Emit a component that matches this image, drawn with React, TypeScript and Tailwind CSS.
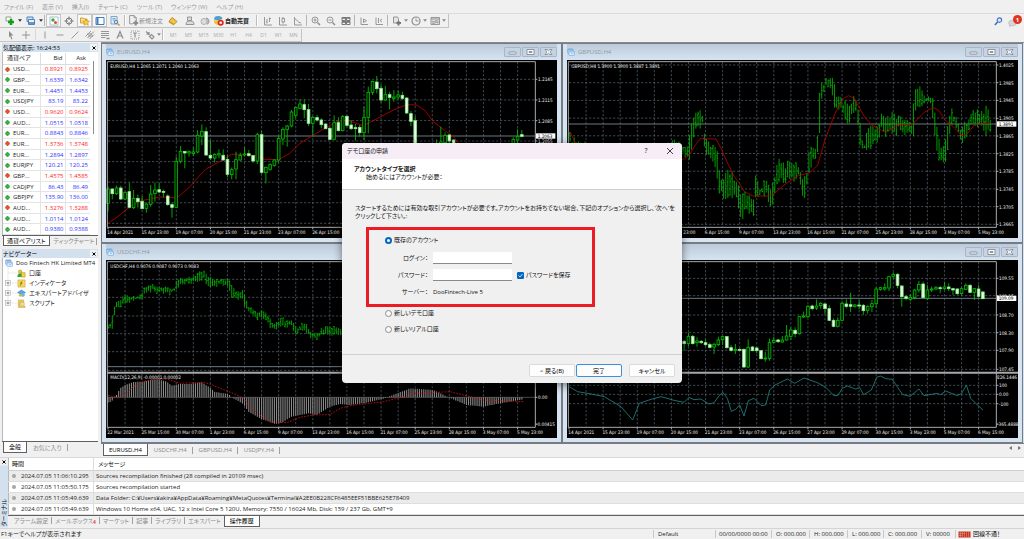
import React from 'react';

/* ---------- chart primitives ---------- */

// [wick top, body top, body bottom, wick bottom, filled]
type Candle = [number, number, number, number, 0 | 1] | null;
type Pt = [number, number];
type Env = [number, number, number];

const GREEN = '#00c000';
const STEP = 12.8;

const line = (pts: Pt[]) => pts.map((p) => p.join(',')).join(' ');

function Candles({ data, start = 0 }: { data: Candle[]; start?: number }) {
  return (
    <g>
      {data.map((c, i) => {
        if (!c) return null;
        const x = 24 + STEP * (i + start);
        const [h, t, b, l, f] = c;
        return (
          <g key={i}>
            <path d={`M${x} ${h}V${l}`} stroke={GREEN} strokeWidth="2.6" />
            <rect x={x - 4} y={t} width="8" height={Math.max(b - t, 3)} fill={f ? '#e4ffe0' : '#001800'} stroke={f ? '#8be88b' : GREEN} strokeWidth="2.4" />
          </g>
        );
      })}
    </g>
  );
}

function sample(env: Env[], x: number): Pt {
  for (let i = 1; i < env.length; i++) {
    if (x <= env[i][0]) {
      const a = env[i - 1];
      const b = env[i];
      const k = (x - a[0]) / (b[0] - a[0] || 1);
      return [a[1] + (b[1] - a[1]) * k, a[2] + (b[2] - a[2]) * k];
    }
  }
  const e = env[env.length - 1];
  return [e[1], e[2]];
}

const noise = (n: number) => {
  const v = Math.sin(n * 12.9898) * 43758.5453;
  return v - Math.floor(v);
};

function Bars({ env, jitter }: { env: Env[]; jitter: number }) {
  const out: React.ReactNode[] = [];
  const end = env[env.length - 1][0];
  for (let i = 0, x = env[0][0]; x <= end; i++, x += 6.4) {
    const [h, l] = sample(env, x);
    const a = h + (noise(i) - 0.35) * jitter;
    const b = l + (noise(i + 99) - 0.65) * jitter;
    const o = a + (b - a) * noise(i + 7);
    const c = a + (b - a) * noise(i + 31);
    out.push(<path key={i} d={`M${x} ${a}V${b}M${x - 3} ${o}H${x}M${x} ${c}H${x + 3}`} />);
  }
  return <g stroke="#00b400" strokeWidth="2.6" fill="none">{out}</g>;
}

function range(from: number, step: number, to: number) {
  const r: number[] = [];
  for (let v = from; v <= to; v += step) r.push(v);
  return r;
}

type Label = [number, string];

interface ChartProps {
  caption: string;
  rows: number[];
  labels: Label[];
  price?: Label;
  dates: string[];
  firstDate?: number;
  split?: boolean;
  priceLine: number;
  children: React.ReactNode;
}

function Chart({ caption, rows, labels, price, dates, firstDate = 0, split, priceLine, children }: ChartProps) {
  return (
    <svg viewBox="18 60 1353 534" className="block h-auto w-full bg-black font-['DejaVu_Sans_Condensed','DejaVu_Sans',sans-serif] text-[14px]">
      <g stroke="#5b6a78" strokeWidth="2" strokeDasharray="7 5" fill="none">
        {range(75.2, 51.2, 1300).map((x) => <path key={x} d={`M${x} 66V560`} />)}
        {rows.map((y) => <path key={y} d={`M24 ${y}H1304`} />)}
      </g>
      <path d={`M24 ${priceLine}H1306`} stroke="#6c7884" strokeWidth="3" />
      {children}
      {split && <path d="M22 398H1371" stroke="#a8a8a8" strokeWidth="6" />}
      <path d="M22 65H1306V562H22Z" stroke="#a9a9a9" strokeWidth="3" fill="none" />
      <g stroke="#b0b0b0" strokeWidth="3">
        {range(24, 102.4, 1300).map((x) => <path key={x} d={`M${x} 562v6`} />)}
        {labels.map(([y]) => <path key={y} d={`M1306 ${y}h6`} />)}
      </g>
      <g fill="#ececec">
        {caption && <text x="31" y="83">{caption}</text>}
        {labels.map(([y, t]) => <text key={t} x={t.length > 7 ? 1308 : 1314} y={y + 6}>{t}</text>)}
        {dates.map((d, i) => <text key={d} x={22 + 102.4 * (i + firstDate)} y="582">{d}</text>)}
      </g>
      {price && (
        <g>
          <rect x="1308" y={price[0] - 8} width="58" height="16" fill="#fff" />
          <text x="1313" y={price[0] + 5} fill="#000">{price[1]}</text>
        </g>
      )}
    </svg>
  );
}

/* ---------- chart data ---------- */

const eurusd: Candle[] = [
  [440, 447, 490, 515, 0], [445, 447, 461, 478, 1], [437, 444, 461, 465, 0], [437, 444, 477, 480, 1], [455, 457, 477, 480, 0],
  [429, 455, 502, 505, 1], [450, 475, 503, 507, 0], [464, 475, 485, 503, 1], [468, 484, 506, 508, 1], [488, 492, 505, 518, 0],
  [435, 462, 493, 500, 0], [428, 450, 461, 485, 0], [430, 449, 456, 460, 1], [449, 454, 457, 472, 1], [463, 468, 494, 497, 1],
  [488, 494, 502, 533, 1], [350, 364, 502, 503, 0], [318, 334, 364, 370, 0], [333, 334, 339, 385, 1], [331, 335, 339, 350, 0],
  [322, 336, 341, 348, 0], [270, 286, 336, 340, 0], [253, 274, 288, 315, 0], [262, 275, 345, 348, 1], [300, 346, 354, 360, 1],
  [340, 343, 354, 368, 0], [328, 341, 345, 355, 0], [328, 346, 360, 362, 1], [345, 358, 403, 412, 1], [383, 389, 404, 418, 0],
  [335, 359, 387, 418, 0], [338, 346, 360, 362, 0], [322, 342, 345, 350, 0], [330, 341, 347, 350, 1], [345, 347, 363, 368, 1],
  [278, 284, 363, 372, 0], [273, 284, 397, 402, 1], [380, 382, 398, 430, 0], [370, 374, 388, 392, 0], [358, 360, 376, 380, 0],
  [288, 295, 360, 368, 0], [262, 268, 297, 315, 0], [255, 258, 269, 320, 0], [210, 216, 258, 262, 0], [200, 202, 226, 235, 0],
  [177, 192, 205, 208, 0], [178, 194, 209, 235, 1], [192, 209, 250, 258, 1], [228, 232, 250, 290, 0], [225, 233, 240, 245, 1],
  [235, 240, 254, 265, 1], [250, 252, 266, 268, 1], [262, 265, 298, 300, 1], [226, 248, 298, 300, 0], [232, 248, 272, 274, 1],
  [225, 230, 272, 274, 0], [226, 229, 256, 260, 1], [240, 255, 266, 270, 1], [252, 263, 266, 302, 1], [255, 262, 278, 290, 1],
  [200, 232, 278, 300, 0], [140, 157, 232, 280, 0], [122, 124, 157, 165, 0], [108, 126, 146, 160, 1], [133, 145, 180, 188, 1],
  [138, 164, 180, 182, 0], [155, 164, 172, 208, 1], [150, 171, 175, 185, 0], [152, 165, 171, 178, 0], [155, 166, 175, 180, 1],
  [172, 174, 219, 222, 1], [213, 221, 244, 258, 1], [228, 242, 330, 335, 1], null, null, null, null,
  [298, 310, 330, 335, 0], [260, 306, 340, 345, 0], [278, 286, 308, 312, 0], [282, 285, 303, 320, 1], [298, 300, 330, 335, 1],
  null, null, null, null, null, null, null, null, null, null, null, null, null,
  [292, 298, 310, 320, 0], [268, 289, 300, 315, 0], [270, 284, 289, 292, 1],
];

const eurusdAvg: Pt[] = [
  [24, 550], [60, 525], [90, 500], [120, 483], [180, 471], [230, 474], [270, 440], [300, 405], [320, 386], [360, 364], [395, 343],
  [440, 343], [470, 348], [495, 358], [535, 359], [570, 340], [600, 310], [640, 285], [680, 262], [710, 245], [740, 240], [790, 257],
  [830, 237], [880, 210], [920, 194], [950, 195], [975, 212], [1000, 245], [1025, 265], [1060, 290], [1080, 315],
];

const gbpusd: Env[] = [
  [27, 285, 310], [40, 300, 345], [180, 340, 380], [340, 305, 360], [375, 320, 350], [385, 285, 355], [395, 240, 305], [405, 222, 275], [424, 215, 250],
  [428, 285, 330], [440, 310, 355], [460, 320, 365], [467, 320, 410], [475, 390, 460], [485, 430, 475], [500, 393, 470], [515, 400, 475],
  [530, 440, 480], [540, 455, 545], [550, 460, 515], [560, 470, 505], [577, 480, 548], [583, 405, 465], [600, 440, 470], [618, 415, 470],
  [628, 440, 515], [640, 400, 465], [655, 362, 420], [668, 370, 435], [685, 370, 420], [700, 360, 420], [715, 380, 412], [730, 415, 485],
  [738, 390, 440], [745, 335, 400], [757, 320, 350], [765, 325, 360], [770, 280, 345], [775, 148, 280], [785, 118, 155], [797, 118, 140],
  [807, 95, 145], [820, 140, 200], [830, 170, 210], [850, 180, 225], [860, 190, 260], [875, 178, 215], [885, 175, 220], [892, 200, 270],
  [900, 280, 340], [910, 305, 330], [928, 245, 330], [940, 250, 300], [950, 270, 325], [963, 200, 260], [975, 230, 285], [985, 220, 270],
  [1005, 230, 290], [1020, 215, 260], [1035, 240, 285], [1050, 250, 290], [1058, 180, 290], [1065, 150, 215], [1072, 140, 195], [1085, 150, 190],
  [1095, 165, 200], [1110, 165, 190], [1120, 200, 280], [1130, 260, 360], [1140, 320, 370], [1155, 300, 370], [1162, 240, 320], [1168, 200, 260],
  [1180, 215, 255], [1195, 250, 300], [1205, 270, 320], [1215, 240, 290], [1230, 220, 260], [1245, 210, 265], [1262, 220, 250], [1275, 190, 290],
  [1290, 235, 262],
];

const gbpusdAvg: Pt[] = [
  [27, 275], [45, 312], [200, 380], [370, 357], [385, 345], [400, 320], [418, 296], [465, 297], [480, 325], [500, 370], [520, 410], [535, 430],
  [550, 455], [575, 468], [620, 468], [640, 460], [672, 433], [712, 407], [747, 398], [770, 375], [792, 300], [822, 220], [847, 176],
  [862, 167], [880, 175], [907, 225], [932, 255], [974, 278], [1012, 255], [1054, 253], [1092, 215], [1117, 203], [1132, 210], [1154, 242],
  [1177, 260], [1202, 287], [1217, 283], [1242, 253], [1287, 250],
];

const usdchf: Env[] = [
  [24, 258, 268], [36, 235, 268], [42, 200, 235], [50, 185, 205], [60, 180, 200], [75, 165, 190], [85, 163, 185], [100, 170, 182],
  [125, 160, 180], [128, 145, 180], [135, 140, 155], [150, 135, 155], [158, 130, 150], [175, 143, 160], [190, 142, 160], [210, 145, 162],
  [225, 140, 152], [230, 120, 145], [245, 115, 135], [260, 108, 130], [275, 110, 130], [290, 100, 125], [300, 95, 122], [312, 88, 118],
  [320, 105, 135], [340, 122, 140], [355, 118, 138], [385, 115, 135], [395, 135, 175], [410, 160, 178], [425, 148, 175], [435, 170, 205],
  [445, 200, 215], [460, 208, 225], [472, 218, 240], [485, 215, 232], [500, 220, 240], [512, 240, 268], [525, 255, 268], [545, 230, 255],
  [555, 245, 262], [575, 240, 260], [590, 262, 285], [605, 252, 270], [618, 248, 280], [630, 272, 290], [655, 285, 300], [662, 265, 285],
  [700, 258, 285], [740, 265, 280],
];

const macd: Env[] = [
  [24, 488, 0], [35, 485, 0], [42, 472, 0], [50, 465, 0], [60, 445, 0], [75, 435, 0], [100, 426, 0], [130, 425, 0], [150, 420, 0],
  [175, 418, 0], [200, 425, 0], [215, 437, 0], [240, 432, 0], [270, 432, 0], [305, 427, 0], [325, 440, 0], [345, 456, 0], [385, 462, 0],
  [400, 475, 0], [430, 492, 0], [445, 515, 0], [480, 535, 0], [525, 552, 0], [545, 548, 0], [575, 530, 0], [600, 525, 0], [625, 520, 0],
  [650, 525, 0], [690, 500, 0], [720, 492, 0], [750, 495, 0], [800, 488, 0], [850, 476, 0], [930, 445, 0], [1000, 450, 0], [1050, 474, 0],
  [1100, 495, 0], [1150, 500, 0], [1200, 490, 0], [1270, 478, 0],
];

const macdSignal: Pt[] = [
  [24, 467], [60, 473], [75, 465], [100, 440], [130, 425], [160, 418], [200, 417], [240, 430], [310, 427], [330, 432], [360, 445],
  [400, 460], [430, 475], [450, 500], [480, 525], [510, 545], [560, 548], [600, 532], [640, 525], [690, 524], [720, 505], [750, 497],
  [850, 485], [950, 460], [1050, 455], [1150, 480], [1270, 485],
];

const usdjpy: Candle[] = [
  [300, 304, 311, 332, 1], [278, 289, 311, 318, 0], [285, 289, 311, 313, 1], [292, 303, 308, 320, 0], [300, 304, 308, 312, 1],
  [298, 308, 314, 318, 1], [308, 314, 322, 325, 1], [308, 313, 321, 342, 0], [290, 300, 314, 318, 0], [288, 290, 299, 315, 0],
  [288, 290, 323, 326, 1], [315, 323, 331, 335, 1], [312, 328, 331, 342, 0], [325, 328, 331, 332, 1], [326, 328, 381, 384, 1],
  [298, 322, 381, 384, 0], [318, 321, 332, 334, 1], [320, 324, 332, 340, 1], [330, 332, 356, 358, 1], [335, 354, 357, 365, 0],
  [295, 308, 356, 362, 0], [290, 301, 307, 310, 0], [296, 300, 305, 309, 1], [288, 300, 306, 308, 0], [255, 288, 300, 302, 0],
  [262, 270, 289, 300, 0], [262, 271, 281, 292, 1], [228, 230, 281, 284, 0], [215, 228, 231, 234, 0], [195, 199, 230, 234, 0],
  [194, 198, 206, 211, 1], [178, 198, 204, 210, 0], [186, 190, 197, 206, 0], [190, 192, 206, 222, 1], [196, 206, 241, 243, 1],
  [235, 241, 259, 262, 1], [232, 241, 259, 262, 0], [184, 190, 241, 244, 0], [178, 192, 199, 205, 1], [158, 194, 199, 216, 1],
  [192, 195, 199, 203, 0], [180, 195, 198, 208, 1], [192, 196, 212, 224, 1], [196, 200, 211, 221, 0], [180, 191, 200, 216, 0],
  [142, 147, 191, 203, 0], [141, 143, 148, 152, 0], [130, 143, 147, 152, 0], [108, 110, 144, 153, 0], [97, 103, 109, 115, 0],
  [100, 103, 136, 145, 1], [135, 138, 170, 200, 1], [165, 170, 175, 181, 1], [162, 172, 178, 184, 0], [147, 150, 173, 178, 0],
  [123, 133, 150, 158, 0], [125, 132, 173, 176, 1], [135, 150, 175, 180, 0], [140, 147, 150, 156, 0], [138, 143, 147, 150, 0],
  [138, 143, 145, 160, 1], [125, 141, 146, 150, 0], [130, 141, 146, 153, 1], [143, 146, 150, 165, 1], [145, 147, 161, 165, 1],
  [142, 146, 161, 164, 0], [130, 136, 148, 150, 0], [132, 136, 157, 160, 1], [145, 146, 157, 180, 0], [135, 147, 169, 175, 1],
  [153, 156, 176, 178, 1],
];

const cci: Pt[] = [
  [24, 440], [50, 455], [90, 462], [130, 470], [180, 500], [215, 540], [235, 490], [270, 478], [300, 470],
  [339, 481], [369, 487], [384, 472], [399, 479], [419, 477], [444, 492], [459, 488], [474, 467], [486, 457], [499, 475], [511, 514],
  [524, 508], [536, 495], [549, 528], [562, 482], [579, 475], [601, 497], [614, 495], [626, 450], [642, 435], [679, 417], [701, 430],
  [729, 414], [769, 428], [794, 442], [819, 467], [831, 466], [844, 445], [859, 438], [884, 447], [896, 443], [908, 464], [931, 450],
  [947, 412], [959, 408], [974, 416], [994, 418], [1009, 440], [1024, 463], [1047, 469], [1074, 447], [1089, 467], [1129, 460],
  [1139, 464], [1154, 453], [1189, 467], [1202, 460], [1216, 435], [1229, 475], [1244, 490], [1266, 510],
];

const marchDates = ['22 Mar 2021', '25 Mar 15:00', '30 Mar 07:00', '1 Apr 23:00', '6 Apr 15:00', '9 Apr 07:00', '13 Apr 23:00', '16 Apr 15:00', '21 Apr 07:00', '25 Apr 23:00', '28 Apr 15:00', '3 May 07:00', '5 May 23:00'];
const aprilDates = ['14 Apr 2021', '15 Apr 23:00', '19 Apr 07:00', '20 Apr 15:00', '21 Apr 23:00', '23 Apr 07:00', '26 Apr 15:00', '27 Apr 23:00', '29 Apr 07:00', '30 Apr 15:00', '3 May 23:00', '5 May 07:00', '6 May 15:00'];

/* ---------- windows ---------- */

function WindowGlyph() {
  return (
    <svg viewBox="0 0 18 18" className="size-2 shrink-0">
      <rect x="1.5" y="2" width="12" height="10" rx="1" fill="#cfe3f8" stroke="#6ea8de" strokeWidth="1.6" />
      <path d="M2 4h11" stroke="#6ea8de" strokeWidth="2.6" />
      <rect x="4.500" y="7" width="12" height="9.500" rx="1" fill="#f2f8ff" stroke="#6ea8de" strokeWidth="1.6" />
      <path d="M5 9h11M8 14l2-2 2 1 2-2" stroke="#6ea8de" strokeWidth="1.6" fill="none" />
    </svg>
  );
}

function ChartWindow({ title, children }: { title: string; children: React.ReactNode }) {
  return (
    <section className="min-w-0 border border-[#767c84] bg-[#d6e3f1] px-1 pb-1">
      <header className="flex h-4 items-center gap-[3px] bg-linear-to-b from-[#bccada] to-[#d6e3f1]">
        <WindowGlyph />
        <h2 className="flex-1 text-[#8f9aa6]">{title}</h2>
        <div className="flex gap-px">
          {['最小化', '最大化', '閉じる'].map((n, i) => (
            <button key={n} type="button" aria-label={n} className="flex h-[10px] w-[17px] items-center justify-center rounded-[1px] border border-[#a9b6c8] bg-[#c6d3e2]">
              <svg viewBox="0 0 18 12" className="h-[6px] w-[9px]" fill="#fff" stroke="#767f8b" strokeWidth="1.6">
                {i === 0 && <rect x="2" y="6" width="14" height="4" rx="1" />}
                {i === 1 && <path d="M2 1h14v10H2ZM6 5h6v2H6Z" />}
                {i === 2 && <path d="M2 1h4l3 2.500L12 1h4l-4 5 4 5h-4L9 8.500 6 11H2l4-5Z" />}
              </svg>
            </button>
          ))}
        </div>
      </header>
      {children}
    </section>
  );
}

function Tabs({ items, active, tight, className = '' }: { items: string[]; active: number; tight?: boolean; className?: string }) {
  return (
    <div role="tablist" className={`flex items-stretch whitespace-nowrap ${className}`}>
      {items.map((t, i) =>
        i === active ? (
          <button key={t} type="button" role="tab" aria-selected className={`border border-t-0 border-[#606060] bg-white text-black ${tight ? 'px-[3px]' : 'px-[5px]'}`}>{t}</button>
        ) : (
          <button key={t} type="button" role="tab" aria-selected={false} className={`flex items-center text-[#8a8a8a] ${tight ? 'gap-[2px] pl-1' : 'gap-[5px] pl-[6px]'}`}>
            {t}
            <span className="h-[7px] w-px bg-[#a0a0a0]" />
          </button>
        ),
      )}
    </div>
  );
}

/* ---------- toolbar ---------- */

function Glyph({ children, box, size = 'w-[15px]', label }: { children: React.ReactNode; box?: boolean; size?: string; label: string }) {
  return (
    <button type="button" aria-label={label} className={`flex h-[13px] shrink-0 items-center justify-center ${size} ${box ? 'border border-[#c3c3c3] bg-[#f8f8f8]' : ''}`}>
      <svg viewBox="0 0 20 20" className="size-[10px]" fill="none" stroke="#8d8d8d" strokeWidth="1.8">{children}</svg>
    </button>
  );
}

const Arrow = ({ grey }: { grey?: boolean }) => (
  <svg viewBox="0 0 6 4" className="h-[3px] w-1 shrink-0"><path d="M0 0h6L3 4Z" fill={grey ? '#8a8a8a' : '#333'} /></svg>
);
const Sep = () => <span className="mx-px h-[11px] w-px shrink-0 bg-[#b4b4b4]" />;
const Handle = () => <span className="ml-px mr-[2px] h-[11px] w-[2px] shrink-0 border-l border-[#bcbcbc] bg-white" />;

function TopToolbar() {
  return (
    <div className="flex h-[14px] items-center">
      <div className="flex h-[14px] items-center border-r border-b border-[#c4c4c4] pl-px">
        <Glyph label="新規チャート" size="w-[17px]">
          <path d="M2 2h10v8H2Z" fill="#fff" stroke="#7d9a7d" />
          <path d="M12 6v12M6 12h12" stroke="#169c1c" strokeWidth="5" />
        </Glyph>
        <Arrow />
        <Glyph label="プロファイル" size="w-[17px]">
          <path d="M2 2h12v9H2Z" fill="#cfe3f6" stroke="#3c78b4" />
          <path d="M5 7h12v10H5Z" fill="#e9f3fc" stroke="#3c78b4" />
          <path d="M5 14h12" stroke="#3c78b4" strokeWidth="3" />
        </Glyph>
        <Arrow />
        <Sep />
        <Glyph box label="気配値表示">
          <path d="M2 2h16v16H2Z" fill="#fff" stroke="#9db7cf" />
          <circle cx="8" cy="8" r="3.500" fill="#3cab3c" stroke="none" />
          <circle cx="13" cy="13" r="3" fill="#e34b32" stroke="none" />
        </Glyph>
        <Glyph label="十字カーソル" size="w-[16px]">
          <circle cx="10" cy="10" r="6" stroke="#6d6d6d" />
          <path d="M10 1v7M10 12v7M1 10h7M12 10h7" stroke="#6d6d6d" />
        </Glyph>
        <Glyph box label="ナビゲーター">
          <path d="M1 4h6l2 2h5v8H1Z" fill="#ffe08a" stroke="#c8962a" />
          <path d="m12 6 2 4 5 .5-3.500 3 1 5-4.500-2.500L8 18.500l1-5-3.500-3 5-.5Z" fill="#ffd23c" stroke="#c08a12" strokeWidth="1.200" />
        </Glyph>
        <Glyph box label="ターミナル">
          <path d="M2 3h16v14H2Z" fill="#fff" stroke="#2f6db3" />
          <path d="M3 4h4v12H3Z" fill="#3a7fd0" stroke="none" />
        </Glyph>
        <Glyph label="テスター" size="w-[16px]">
          <path d="M2 1h12v15H2Z" fill="#e3eef8" stroke="#7b9cbc" />
          <path d="M5 5h6M5 8h6" stroke="#7b9cbc" />
          <circle cx="12" cy="12" r="3.500" fill="#bfe0f6" stroke="#4c7fae" />
          <path d="m15 15 4 4" stroke="#c79a2b" strokeWidth="3" />
        </Glyph>
        <Handle />
        <button type="button" className="flex shrink-0 items-center text-[#8d8d8d]">
          <svg viewBox="0 0 20 20" className="size-[11px]" fill="none" stroke="#8d8d8d" strokeWidth="1.600">
            <path d="M3 1h8l4 4v6M3 1v15h6" /><path d="M11 1v4h4" /><path d="M14 10v9M9.500 14.500h9" strokeWidth="4" />
          </svg>
          新規注文
        </button>
        <Glyph label="MetaEditor" size="w-[19px]">
          <path d="m2 11 6-8 10 8-6 6Z" fill="#f5c443" stroke="#b8861b" />
          <path d="m2 11 10 6v2L2 13Z" fill="#c58f1c" stroke="none" />
        </Glyph>
        <Glyph label="印刷"><path d="M5 2h8v7H5ZM2 17c0-5 2-7 8-7s8 2 8 7Z" fill="#ddd" /></Glyph>
        <Glyph label="VPS"><circle cx="8" cy="11" r="6" fill="#ddd" stroke="#aaa" /><path d="M12 4c5 0 6 5 6 7s-2 5-4 6" fill="#bbb" /></Glyph>
        <button type="button" className="flex shrink-0 items-center gap-px pl-px font-bold text-[#222]">
          <svg viewBox="0 0 20 20" className="size-[11px]">
            <path d="M2 8c0-5 4-6 8-6s7 2 7 5l-7 4Z" fill="#4f9fd0" /><path d="M2 9c4 2 9 1 13-2l-1 10c-4 2-9 1-12-3Z" fill="#f1c13b" />
            <circle cx="14" cy="14" r="5.500" fill="#d9291c" /><path d="M12 12h4v4h-4Z" fill="#fff" />
          </svg>
          自動売買
        </button>
        <span className="w-[6px]" />
        <Handle />
        <Glyph label="バーチャート"><path d="M3 2v16h15M8 6v9M8 12H6M13 3v9M13 5h3" /></Glyph>
        <Glyph label="ローソク足"><path d="M3 2v16h15M10 2v3M10 12v3M8 5h5v7H8Z" /></Glyph>
        <Glyph label="ラインチャート"><path d="M3 2v16h15M4 6c4 0 5 8 12 8" /></Glyph>
        <Sep />
        <Glyph label="拡大"><circle cx="8" cy="8" r="6" /><path d="m13 13 5 5" strokeWidth="3" /><path d="M5 8h6M8 5v6" /></Glyph>
        <Glyph label="縮小"><circle cx="8" cy="8" r="6" /><path d="m13 13 5 5" strokeWidth="3" /><path d="M5 8h6" /></Glyph>
        <Glyph label="整列"><path d="M2 3h7v6H2ZM11 3h7v6h-7ZM2 11h7v6H2ZM11 11h7v6h-7Z" stroke="#6a6a6a" /><path d="M2 4h16M2 12h16" strokeWidth="3" stroke="#777" /></Glyph>
        <Sep />
        <Glyph label="自動スクロール"><path d="M4 3v14h14M9 6v7l6-3.500Z" /></Glyph>
        <Glyph label="チャートシフト"><path d="M4 3v14h14M9 4v10M16 6l-4 3 4 3" /></Glyph>
        <Sep />
        <Glyph label="インディケータ"><path d="M3 2h8l2 3v9H3Z" fill="#e4e4e4" /><path d="M13 10v9M9 14h9" strokeWidth="4" stroke="#777" /></Glyph>
        <Arrow grey />
        <Glyph label="時間足"><circle cx="10" cy="10" r="8" strokeWidth="2.400" /><path d="M10 5v5h5" /></Glyph>
        <Arrow grey />
        <Glyph label="定型チャート"><path d="M2 3h17v14H2ZM2 6h17M4 10l4 2 4-3 5 2M4 14l4 1 4-3 5 2" fill="#e2e2e2" /></Glyph>
        <Arrow grey />
        <span className="w-[2px]" />
      </div>
      <div className="flex flex-1 items-center justify-end gap-[5px] pr-[2px]">
        <svg viewBox="0 0 20 20" className="size-[9px]" fill="none" stroke="#3f6fc4" strokeWidth="2.400">
          <circle cx="12" cy="7" r="5" fill="#dfeafb" /><path d="m8 11-6 7" strokeWidth="3.500" />
        </svg>
        <div className="relative flex h-3 w-[14px] items-end">
          <svg viewBox="0 0 20 16" className="h-2 w-[10px]"><ellipse cx="9" cy="8" rx="8" ry="6" fill="#d6d6d6" stroke="#b5b5b5" /><path d="m3 12-1 4 5-2Z" fill="#bdbdbd" /></svg>
          <span className="absolute top-0 right-0 flex size-[9px] items-center justify-center rounded-full bg-[#df3520] text-[6px] font-bold text-white">1</span>
        </div>
      </div>
    </div>
  );
}

function DrawToolbar() {
  return (
    <div className="flex h-[14px] items-center">
      <div className="flex h-[13px] items-center border-r border-b border-[#c4c4c4] text-[#a8a8a8]">
        <span className="w-[3px]" />
        <Glyph label="カーソル"><path d="m6 2 9 9h-5l3 7-2 1-3-7-2 3Z" fill="#8d8d8d" stroke="none" /></Glyph>
        <Glyph label="クロスヘア" size="w-[16px]"><path d="M10 2v16M2 10h16" /></Glyph>
        <span className="mx-px h-[11px] w-px bg-[#d8d8d8]" />
        <Glyph label="垂直線"><path d="M10 3v14" /></Glyph>
        <Glyph label="水平線"><path d="M3 10h14" /></Glyph>
        <Glyph label="トレンドライン"><path d="m3 17 14-14" /></Glyph>
        <Glyph label="チャネル"><path d="m1 13 11-11M5 16 18 3M9 18l9-9M4 8h10M6 12h10" /></Glyph>
        <Glyph label="フィボナッチ"><path d="M2 3h16M2 7h16M2 11h16M2 15h9" /><path d="M13 17h6" strokeWidth="3" /></Glyph>
        <Glyph label="テキスト"><path d="m4 17 6-14 6 14M6.500 12h7" strokeWidth="2.400" /></Glyph>
        <Glyph label="ラベル"><path d="M2 2h16v16H2Z" strokeDasharray="2 2" /><path d="M6 6h8M10 6v9" strokeWidth="2.400" /></Glyph>
        <Glyph label="矢印"><path d="m2 3 6 5M3 8l5 1V4M9 13l4-4 5 5-4 4Z" strokeWidth="2.400" /></Glyph>
        <Arrow grey />
        <Handle />
        {['M1', 'M5', 'M15', 'M30', 'H1', 'H4', 'D1', 'W1', 'MN'].map((p) => (
          <button key={p} type="button" className="w-[15px] text-center text-[5px]">{p}</button>
        ))}
      </div>
    </div>
  );
}

/* ---------- side panels ---------- */

const quotes: [string, string, string, 0 | 1][] = [
  ['USD...', '0.8921', '0.8925', 0], ['GBP...', '1.6339', '1.6342', 1], ['EUR...', '1.4451', '1.4453', 1], ['USDJPY', '83.19', '83.22', 1],
  ['USD...', '0.9620', '0.9624', 0], ['AUD...', '1.0515', '1.0518', 1], ['EUR...', '0.8843', '0.8846', 1], ['EUR...', '1.3736', '1.3748', 0],
  ['EUR...', '1.2894', '1.2897', 1], ['EURJPY', '120.21', '120.25', 1], ['GBP...', '1.4575', '1.4585', 0], ['CADJPY', '86.43', '86.49', 1],
  ['GBPJPY', '135.90', '136.00', 1], ['AUD...', '1.3276', '1.3288', 0], ['AUD...', '1.0114', '1.0124', 1], ['AUD...', '0.9380', '0.9388', 1],
];

function PanelTitle({ children }: { children: React.ReactNode }) {
  return (
    <header className="flex h-[9px] items-center justify-between bg-[#d3e1ee] px-px text-black">
      <h2>{children}</h2>
      <button type="button" aria-label="閉じる" className="flex size-[7px] items-center justify-center bg-[#eef3f8]">
        <svg viewBox="0 0 8 8" className="size-1"><path d="m1 1 6 6M7 1 1 7" stroke="#000" strokeWidth="2" /></svg>
      </button>
    </header>
  );
}

function MarketWatch() {
  return (
    <section className="pt-px">
      <PanelTitle>気配値表示: 16:24:53</PanelTitle>
      <div className="flex justify-between border-l border-[#b8b8b8] bg-white pt-px pr-1">
        <table className="h-[182px] w-[87px] table-fixed border-collapse">
          <thead>
            <tr className="h-[11px] border-b border-[#dcdcdc]">
              <th className="w-[37px] border-r border-[#dcdcdc] pl-1 text-left font-normal">通貨ペア</th>
              <th className="border-r border-[#dcdcdc] pr-[2px] text-right font-normal">Bid</th>
              <th className="pr-1 text-right font-normal">Ask</th>
            </tr>
          </thead>
          <tbody>
            {quotes.map(([s, b, a, up], i) => (
              <tr key={i} className={`border-b border-[#e4e4e4] ${up ? 'text-[#2f2fff]' : 'text-[#ff2020]'}`}>
                <td className="border-r border-[#e4e4e4] pl-[2px] text-[#222]">
                  <span className="flex items-center gap-[3px]">
                    <svg viewBox="0 0 10 10" className="size-[5px] shrink-0">
                      <path d="m5 0 5 5-5 5-5-5Z" fill={up ? '#2fb43c' : '#e0562c'} stroke={up ? '#16831f' : '#a83312'} />
                    </svg>
                    {s}
                  </span>
                </td>
                <td className="border-r border-[#e4e4e4] pr-px text-right">{b}</td>
                <td className="pr-[2px] text-right">{a}</td>
              </tr>
            ))}
          </tbody>
        </table>
        <span className="mt-2 h-[73px] w-px bg-[#8c8c8c]" />
      </div>
      <Tabs tight items={['通貨ペアリスト', 'ティックチャート']} active={0} className="h-[11px] border-t border-[#606060] pl-px" />
    </section>
  );
}

function TreeRow({ label, kind }: { label: string; kind: number }) {
  return (
    <li className="flex h-[10px] items-center pl-[2px]">
      <svg viewBox="0 0 24 20" className="h-[10px] w-3 shrink-0" fill="none">
        <path d="M6 0v10h18" stroke="#b5b5b5" strokeDasharray="1.500 1.500" />
        {kind !== 3 && <path d="M6 10v10" stroke="#b5b5b5" strokeDasharray="1.500 1.500" />}
        {kind > 0 && <><rect x="1" y="5" width="10" height="10" fill="#fff" stroke="#999" /><path d="M3 10h6M6 7v6" stroke="#333" /></>}
      </svg>
      <svg viewBox="0 0 20 20" className="size-[9px] shrink-0">
        {kind === 0 && <><circle cx="7" cy="6" r="4" fill="#e8c13a" stroke="#a8821a" /><path d="M1 18c0-7 3-8 6-8h4v8Z" fill="#2fa83a" /><path d="M10 8h8v10h-8Z" fill="#f0d23c" stroke="#a8821a" /></>}
        {kind === 1 && <><path d="M2 2h16v16H2Z" fill="#f6d75a" stroke="#b9942a" /><path d="M12 5c-4 0-2 10-5 10M7 9h5" stroke="#7a5a08" strokeWidth="1.600" fill="none" /></>}
        {kind === 2 && <><path d="m1 8 9-6 9 6-9 4Z" fill="#58a7da" stroke="#2e76a8" /><circle cx="13" cy="13" r="4.500" fill="#6cb7e4" /><circle cx="7" cy="14" r="3" fill="#e3b63c" /></>}
        {kind === 3 && <><path d="M3 2h12v5H6v9h12v3H3Z" fill="#f0cf55" stroke="#b9942a" /><path d="M7 8h9v6H7Z" fill="#f9e7a0" stroke="#b9942a" /></>}
      </svg>
      <span className="pl-[3px]">{label}</span>
    </li>
  );
}

function Navigator() {
  return (
    <section className="mt-[3px] flex flex-1 flex-col pb-1">
      <PanelTitle>ナビゲーター</PanelTitle>
      <div className="flex-1 border-l border-[#b8b8b8] bg-white">
        <div className="flex h-[10px] items-center gap-[3px] pl-[2px] whitespace-nowrap"><WindowGlyph />Doo Fintech HK Limited MT4</div>
        <ul>
          {['口座', 'インディケータ', 'エキスパートアドバイザ', 'スクリプト'].map((t, i) => <TreeRow key={t} label={t} kind={i} />)}
        </ul>
      </div>
      <Tabs items={['全般', 'お気に入り']} active={0} className="h-[12px] border-t border-[#606060] pl-px" />
    </section>
  );
}

/* ---------- terminal & status ---------- */

const log: [string, string][] = [
  ['2024.07.05 11:06:10.295', 'Sources recompilation finished (28 compiled in 20109 msec)'],
  ['2024.07.05 11:05:50.175', 'Sources recompilation started'],
  ['2024.07.05 11:05:49.639', 'Data Folder: C:¥Users¥akira¥AppData¥Roaming¥MetaQuotes¥Terminal¥A2EE0B228CF6485EEF51BBE625E78409'],
  ['2024.07.05 11:05:49.639', 'Windows 10 Home x64, UAC, 12 x Intel Core 5 120U, Memory: 7550 / 16024 Mb, Disk: 159 / 237 Gb, GMT+9'],
];

function Terminal() {
  return (
    <section className="flex border-t border-[#d8d8d8]">
      <div className="flex w-2 flex-col items-center">
        <button type="button" aria-label="閉じる" className="flex h-2 items-center">
          <svg viewBox="0 0 8 8" className="size-1"><path d="m1 1 6 6M7 1 1 7" stroke="#000" strokeWidth="2" /></svg>
        </button>
        <h2 className="flex flex-1 rotate-180 items-center bg-[#d3e1ee] pt-px text-black [text-orientation:sideways] [writing-mode:vertical-rl]">ターミナル</h2>
      </div>
      <div className="min-w-0 flex-1">
        <table className="w-full border-collapse border-l border-[#b8b8b8] bg-white text-[#222]">
          <thead>
            <tr className="h-3 border-b border-[#d0d0d0]">
              <th className="w-[85px] border-r border-[#dcdcdc] pl-[3px] text-left font-normal text-black">時間</th>
              <th className="pl-1 text-left font-normal text-black">メッセージ</th>
            </tr>
          </thead>
          <tbody>
            {log.map(([t, m], i) => (
              <tr key={i} className="h-[11px] border-b border-[#dedede] odd:bg-[#ebebeb]">
                <td className="border-r border-[#dcdcdc] pl-[3px]">
                  <span className="flex items-center gap-[5px]">
                    <span className="size-1 rounded-full bg-[#a6a6a6]" />
                    {t}
                  </span>
                </td>
                <td className="pl-[2px]">{m}</td>
              </tr>
            ))}
          </tbody>
        </table>
        <div role="tablist" className="flex h-[13px] items-start border-t border-[#606060] pl-[3px] text-[#8a8a8a]">
          {['アラーム設定', 'メールボックス', 'マーケット', '記事', 'ライブラリ', 'エキスパート'].map((t, i) => (
            <button key={t} type="button" role="tab" className="flex h-[10px] items-center pl-[3px]">
              {t}
              {i === 1 && <span className="pt-1 text-[5px] leading-none font-bold text-[#f04040]">4</span>}
              {i < 5 && <span className="ml-[3px] h-[7px] w-px bg-[#a0a0a0]" />}
            </button>
          ))}
          <button type="button" role="tab" aria-selected className="ml-[3px] h-[11px] border border-t-0 border-[#606060] bg-white px-[5px] text-black">操作履歴</button>
        </div>
      </div>
    </section>
  );
}

function StatusBar() {
  const cell = 'border-l border-[#c8c8c8] pl-1';
  return (
    <footer className="flex h-3 items-center border-t border-[#d4d4d4] text-[#222]">
      <span className="flex-1 pl-px">F1キーでヘルプが表示されます</span>
      <span className={`${cell} w-[62px]`}>Default</span>
      <span className="w-[56px] border-l border-[#c8c8c8] pl-[3px]">00/00/0000 00:00</span>
      <span className={`${cell} w-[38px]`}>O: 000.000</span>
      <span className={`${cell} w-[38px]`}>H: 000.000</span>
      <span className={`${cell} w-[36px]`}>L: 000.000</span>
      <span className={`${cell} w-[38px]`}>C: 000.000</span>
      <span className={`${cell} w-[34px]`}>V: 00000</span>
      <span className="flex w-[69px] items-center gap-[2px] border-l border-[#c8c8c8] pl-[2px] text-black">
        <svg viewBox="0 0 26 14" className="h-[7px] w-[13px]"><path d="M1 1h24v12H1Z" fill="#c2321e" /><path d="M5 1v12M9 1v12M13 1v12M17 1v12M21 1v12M1 5h12M1 9h8" stroke="#e9a394" /></svg>
        回線不通！
      </span>
    </footer>
  );
}

/* ---------- dialog ---------- */

const field = 'h-3 w-[79px] border-b border-[#8a8a8a] bg-white px-1 outline-none';
const action = 'h-[13px] w-[46px] rounded-[2px] border bg-[#fdfdfd] text-black';
const radio = 'size-[7px] appearance-none rounded-full border border-[#8c8c8c] bg-[#f8f8f8] checked:border-2 checked:border-[#0067c0] checked:bg-white';

function DemoDialog() {
  return (
    <div role="dialog" aria-labelledby="dlg-title" className="absolute top-[143px] left-1/2 w-[340px] -translate-x-1/2 overflow-hidden rounded-[4px] bg-[#f0f0f0] text-[#111] shadow-[0_2px_8px_rgba(0,0,0,0.5)]">
      <header className="flex h-4 items-center bg-[#f7edf7] pr-2 pl-[5px]">
        <h2 id="dlg-title" className="flex-1">デモ口座の申請</h2>
        <button type="button" aria-label="ヘルプ" className="w-2 text-[7px]">?</button>
        <button type="button" aria-label="閉じる" className="ml-4 flex w-2 justify-center">
          <svg viewBox="0 0 10 10" className="size-[6px]"><path d="m0 0 10 10M10 0 0 10" stroke="#222" strokeWidth="1.400" /></svg>
        </button>
      </header>
      <div className="h-[31px] border-b border-[#cfcfcf] bg-white px-3 pt-[6px]">
        <p className="font-bold">アカウントタイプを選択</p>
        <p className="pl-3">始めるにはアカウントが必要：</p>
      </div>
      <form onSubmit={(e) => e.preventDefault()}>
        <p className="px-[13px] pt-[14px] pb-[7px] whitespace-nowrap">スタートするためには有効な取引アカウントが必要です。アカウントをお持ちでない場合、下記のオプションから選択し、'次へ'を<br />クリックして下さい。:</p>
        <div className="mx-6 w-[229px] border-3 border-[#ec1c24] pt-[6px] pb-[6px] pl-4">
          <label className="flex h-[8px] items-center gap-[2px]"><input type="radio" name="account" defaultChecked className={radio} />既存のアカウント</label>
          <div className="mt-[8px] grid grid-cols-[43px_79px_1fr] items-center gap-x-[5px] gap-y-[5px]">
            <label htmlFor="login" className="text-right">ログイン：</label>
            <input id="login" type="text" className={field} />
            <span />
            <label htmlFor="pass" className="text-right">パスワード：</label>
            <input id="pass" type="password" className={field} />
            <label className="flex items-center gap-[2px]">
              <span className="grid size-[7px]">
                <input type="checkbox" defaultChecked className="col-start-1 row-start-1 size-[7px] appearance-none rounded-[1px] border border-[#0067c0] checked:bg-[#0067c0]" />
                <svg viewBox="0 0 14 14" className="pointer-events-none col-start-1 row-start-1 size-[7px]"><path d="m3 7 3 3 5-6" stroke="#fff" strokeWidth="1.500" fill="none" /></svg>
              </span>
              パスワードを保存
            </label>
            <span className="h-3 text-right leading-3">サーバー：</span>
            <span>DooFintech-Live 5</span>
          </div>
        </div>
        <div className="flex flex-col gap-2 border-b border-[#cfcfcf] pt-[2px] pb-[21px] pl-[43px]">
          <label className="flex h-2 items-center gap-[2px]"><input type="radio" name="account" className={radio} />新しいデモ口座</label>
          <label className="flex h-2 items-center gap-[2px]"><input type="radio" name="account" className={radio} />新しいリアル口座</label>
        </div>
        <div className="flex justify-end gap-px px-[7px] pt-[9px] pb-[6px]">
          <button type="button" className={`${action} border-[#dadada]`}>&lt; 戻る(B)</button>
          <button type="submit" className={`${action} border-[#3c8fd8]`}>完了</button>
          <button type="button" className={`${action} ml-[6px] border-[#dadada]`}>キャンセル</button>
        </div>
      </form>
    </div>
  );
}

/* ---------- page ---------- */

export default function App() {
  return (
    <div className="relative flex min-h-screen flex-col bg-[#f0f0f0] font-['Open_Sans','Noto_Sans_CJK_JP',sans-serif] text-[6px] leading-[8px] text-[#222] [font-feature-settings:'palt']">
      <nav className="flex h-[14px] items-center gap-[9px] border-b border-[#dadada] pl-1 text-[#9a9a9a]">
        {['ファイル (F)', '表示 (V)', '挿入(I)', 'チャート (C)', 'ツール (T)', 'ウィンドウ (W)', 'ヘルプ (H)'].map((m) => <button key={m} type="button">{m}</button>)}
      </nav>
      <TopToolbar />
      <DrawToolbar />
      <main className="flex flex-1">
        <aside className="flex w-[99px] shrink-0 flex-col px-[2px] pr-px">
          <MarketWatch />
          <Navigator />
        </aside>
        <div className="ml-[2px] flex min-w-0 flex-1 flex-col border-t border-[#8a8a8a]">
          <div className="grid flex-1 grid-cols-2 bg-[#d6e3f1] pr-px">
            <ChartWindow title="EURUSD,H4">
              <Chart
                caption="EURUSD,H4  1.2065 1.2071 1.2060 1.2063"
                rows={range(118, 61.7, 555)}
                labels={[[118, '1.2145'], [180, '1.2115'], [242, '1.2085'], [303, '1.2055']]}
                price={[288, '1.2063']}
                priceLine={288}
                dates={aprilDates.slice(0, 7)}
              >
                <polyline points={line(eurusdAvg)} stroke="#b40000" strokeWidth="2.600" fill="none" />
                <Candles data={eurusd} />
              </Chart>
            </ChartWindow>
            <ChartWindow title="GBPUSD,H4">
              <Chart
                caption="GBPUSD,H4  1.3900 1.3900 1.3887 1.3891"
                rows={range(75, 53.1, 560)}
                labels={[[75, '1.4025'], [128, '1.3985'], [181, '1.3945'], [235, '1.3905'], [288, '1.3865'], [341, '1.3825'], [394, '1.3785'], [448, '1.3745'], [500, '1.3705'], [553, '1.3665']]}
                price={[252, '1.3891']}
                priceLine={252}
                dates={marchDates.slice(3)}
                firstDate={3}
              >
                <Bars env={gbpusd} jitter={26} />
                <polyline points={line(gbpusdAvg)} stroke="#b40000" strokeWidth="2.600" fill="none" />
              </Chart>
            </ChartWindow>
            <ChartWindow title="USDCHF,H4">
              <Chart
                caption="USDCHF,H4  0.9076 0.9087 0.9073 0.9083"
                rows={[118, 172, 228, 281, 335, 391]}
                labels={[[472, '0.00'], [552, '-0.00415']]}
                priceLine={380}
                split
                dates={marchDates}
              >
                <Bars env={usdchf} jitter={10} />
                <g stroke="#8c8c8c" strokeWidth="3.200">
                  {range(24, 6.4, 1270).map((x) => <path key={x} d={`M${x} 472V${sample(macd, x)[0]}`} />)}
                </g>
                <path d="M24 472H1306" stroke="#6b6b6b" strokeWidth="2" />
                <polyline points={line(macdSignal)} stroke="#d01010" strokeWidth="2.600" strokeDasharray="5 4" fill="none" />
                <text x="31" y="418" fill="#ececec">MACD(12,26,9) -0.00001 0.00002</text>
              </Chart>
            </ChartWindow>
            <ChartWindow title="USDJPY,H4">
              <Chart
                caption=""
                rows={[115, 167, 225, 278, 331, 388, 436, 463, 491]}
                labels={[[115, '109.55'], [167, '109.15'], [225, '108.70'], [278, '108.30'], [331, '107.90'], [388, '107.45'], [411, '226.1446'], [436, '100'], [463, '0.00'], [491, '-100'], [552, '-365.4888']]}
                price={[175, '109.09']}
                priceLine={175}
                split
                dates={aprilDates}
              >
                <Candles data={usdjpy} start={27} />
                <polyline points={line(cci)} stroke="#1f8080" strokeWidth="2.600" fill="none" />
              </Chart>
            </ChartWindow>
          </div>
          <div className="flex h-[14px] items-start justify-between border-t border-[#767c84] pr-[3px] pl-[2px]">
            <Tabs items={['EURUSD,H4', 'USDCHF,H4', 'GBPUSD,H4', 'USDJPY,H4']} active={0} className="h-[12px]" />
            <div className="flex gap-[6px] pt-[2px] text-[#666]">
              <button type="button" aria-label="前へ"><svg viewBox="0 0 4 6" className="h-1 w-[3px]"><path d="M4 0v6L0 3Z" fill="#666" /></svg></button>
              <button type="button" aria-label="次へ"><svg viewBox="0 0 4 6" className="h-1 w-[3px]"><path d="M0 0v6l4-3Z" fill="#666" /></svg></button>
            </div>
          </div>
        </div>
      </main>
      <Terminal />
      <StatusBar />
      <DemoDialog />
    </div>
  );
}
